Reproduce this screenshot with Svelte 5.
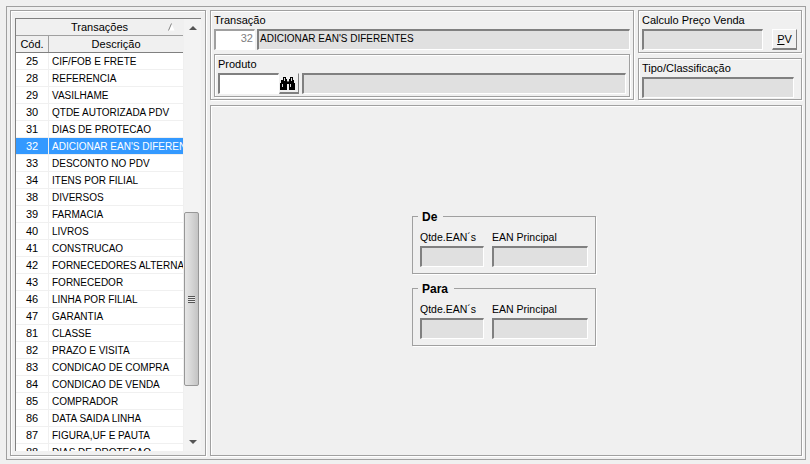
<script>
  const rows = [
    [25, 'CIF/FOB E FRETE'],
    [28, 'REFERENCIA'],
    [29, 'VASILHAME'],
    [30, 'QTDE AUTORIZADA PDV'],
    [31, 'DIAS DE PROTECAO'],
    [32, "ADICIONAR EAN'S DIFERENTES"],
    [33, 'DESCONTO NO PDV'],
    [34, 'ITENS POR FILIAL'],
    [38, 'DIVERSOS'],
    [39, 'FARMACIA'],
    [40, 'LIVROS'],
    [41, 'CONSTRUCAO'],
    [42, 'FORNECEDORES ALTERNATIVOS'],
    [43, 'FORNECEDOR'],
    [46, 'LINHA POR FILIAL'],
    [47, 'GARANTIA'],
    [81, 'CLASSE'],
    [82, 'PRAZO E VISITA'],
    [83, 'CONDICAO DE COMPRA'],
    [84, 'CONDICAO DE VENDA'],
    [85, 'COMPRADOR'],
    [86, 'DATA SAIDA LINHA'],
    [87, 'FIGURA,UF E PAUTA'],
    [88, 'DIAS DE PROTECAO']
  ];
  const groups = ['De', 'Para'];
</script>

<div class="frame">
  <aside class="panel left">
    <div class="grid">
      <div class="table">
        <div class="head-top">
          Transações
          <svg class="sort" width="7" height="8" viewBox="0 0 7 8">
            <path d="M3.5 .5L.5 7.5h6z" fill="#fff" />
            <path d="M3.5 .5L.5 7.5" stroke="#808080" fill="none" />
          </svg>
        </div>
        <div class="head-cols">
          <div class="c1">Cód.</div>
          <div class="c2">Descrição</div>
        </div>
        <div class="rows">
          {#each rows as r}
            <div class="row" class:selected={r[0] === 32}>
              <div class="c1">{r[0]}</div>
              <div class="c2">{r[1]}</div>
            </div>
          {/each}
        </div>
      </div>
      <div class="scrollbar">
        <div class="arrow up"></div>
        <div class="thumb"><div class="grip"></div></div>
        <div class="arrow down"></div>
      </div>
    </div>
  </aside>

  <div class="right">
    <div class="top">
      <section class="panel transacao">
        <div class="label">Transação</div>
        <div class="line">
          <div class="field code">32</div>
          <div class="field sunken desc">ADICIONAR EAN'S DIFERENTES</div>
        </div>
        <div class="panel produto">
          <div class="label">Produto</div>
          <div class="line tight">
            <div class="field prod"></div>
            <button class="find" aria-label="Pesquisar">
              <svg width="16" height="13" viewBox="0 0 16 13" shape-rendering="crispEdges">
                <path d="M3 0h3v2h1v2h2V2h1V0h3v3h1v3h1v7H9V7H7v6H0V6h1V3h2z" fill="#000" />
                <path d="M4 1h1v3H4zM11 1h1v3h-1zM2 7h1v3H2zM10 7h1v3h-1z" fill="#d8d8d8" />
                <path d="M7 4h2v1H7z" fill="#666" />
              </svg>
            </button>
            <div class="field sunken grow"></div>
          </div>
        </div>
      </section>
      <div class="side">
        <section class="panel calc">
          <div class="label">Calculo Preço Venda</div>
          <div class="line">
            <div class="field sunken calc-field"></div>
            <button class="pv"><u>P</u>V</button>
          </div>
        </section>
        <section class="panel tipo">
          <div class="label">Tipo/Classificação</div>
          <div class="field sunken tipo-field"></div>
        </section>
      </div>
    </div>

    <main class="panel main">
      {#each groups as g}
        <fieldset>
          <legend>{g}</legend>
          <div class="cols">
            <div>
              <div class="label">Qtde.EAN´s</div>
              <div class="field sunken qt"></div>
            </div>
            <div>
              <div class="label">EAN Principal</div>
              <div class="field sunken ean"></div>
            </div>
          </div>
        </fieldset>
      {/each}
    </main>
  </div>
</div>

<style>
  :global(body) {
    margin: 0;
    background: #f0f0f0;
  }

  .frame {
    box-sizing: border-box;
    width: 800px;
    height: 454px;
    margin: 6px 0 0 6px;
    padding: 3px;
    display: flex;
    gap: 4px;
    border: 1px solid #a0a0a0;
    font-family: "Liberation Sans", Arial, sans-serif;
    font-size: 11px;
    color: #000;
    background: #f0f0f0;
  }

  .panel {
    box-sizing: border-box;
    border: 1px solid #a0a0a0;
    box-shadow: 1px 1px 0 #fff, inset 1px 1px 0 #fff;
  }

  .left {
    width: 196px;
    height: 446px;
    padding: 7px 4px 4px 4px;
  }

  .grid {
    display: flex;
    height: 433px;
    border-top: 1px solid #808080;
    border-left: 1px solid #808080;
    background: #f0f0f0;
    box-sizing: border-box;
  }

  .table {
    width: 168px;
    overflow: hidden;
    display: flex;
    flex-direction: column;
  }

  .head-top {
    position: relative;
    height: 16px;
    line-height: 16px;
    text-align: center;
    border-bottom: 1px solid #a0a0a0;
    flex: none;
  }

  .sort {
    position: absolute;
    right: 8px;
    top: 4px;
  }

  .head-cols {
    display: flex;
    height: 16px;
    line-height: 16px;
    text-align: center;
    border-bottom: 1px solid #808080;
    flex: none;
  }

  .head-cols .c1 {
    border-right: 1px solid #a0a0a0;
  }

  .c1 {
    width: 32px;
    flex: none;
  }

  .c2 {
    flex: 1;
    white-space: nowrap;
    overflow: hidden;
  }

  .rows {
    flex: 1;
    overflow: hidden;
    background: #fff;
  }

  .row {
    display: flex;
    height: 16px;
    line-height: 16px;
    border-bottom: 1px solid #f0f0f0;
  }

  .row .c1 {
    text-align: center;
    border-right: 1px solid #f0f0f0;
  }

  .row .c2 {
    padding: 0 2px 0 3px;
    font-size: 10px;
    line-height: 18px;
  }

  .row.selected {
    background: #3399ff;
    color: #fff;
  }

  .scrollbar {
    width: 17px;
    margin-left: 1px;
    display: flex;
    flex-direction: column;
    align-items: center;
    background: #f3f3f3;
  }

  .arrow {
    width: 0;
    height: 0;
    border-left: 4px solid transparent;
    border-right: 4px solid transparent;
  }

  .arrow.up {
    margin-top: 7px;
    border-bottom: 4px solid #555;
  }

  .arrow.down {
    margin-top: 54px;
    border-top: 4px solid #555;
  }

  .thumb {
    box-sizing: border-box;
    width: 15px;
    height: 174px;
    margin-top: 182px;
    align-self: flex-start;
    border: 1px solid #979797;
    border-radius: 2px;
    background: linear-gradient(90deg, #e6e6e6, #d6d6d6 50%, #c4c4c4);
    display: flex;
    align-items: center;
    justify-content: center;
  }

  .grip {
    width: 7px;
    height: 7px;
    background: repeating-linear-gradient(180deg, #555 0 1px, #e8e8e8 1px 2px);
  }

  .right {
    flex: 1;
    min-width: 0;
    display: flex;
    flex-direction: column;
    gap: 5px;
  }

  .top {
    display: flex;
    gap: 4px;
    height: 90px;
  }

  .transacao {
    width: 424px;
    padding: 2px 3px 0;
  }

  .label {
    height: 16px;
    line-height: 14px;
  }

  .line {
    display: flex;
    gap: 2px;
  }

  .field {
    box-sizing: border-box;
    height: 21px;
    line-height: 15px;
    background: #fff;
    border-style: solid;
    border-width: 2px 1px 1px 2px;
    border-color: #808080 #fff #fff #808080;
  }

  .sunken {
    background: #e0e0e0;
  }

  .code {
    width: 41px;
    text-align: right;
    padding-right: 1px;
    color: #808080;
    border-color: #a0a0a0 #fff #fff #a0a0a0;
  }

  .desc {
    flex: 1;
    padding-left: 1px;
    font-size: 10px;
  }

  .produto {
    margin-top: 4px;
    height: 43px;
    padding: 2px 3px;
  }

  .tight {
    gap: 0;
  }

  .prod {
    width: 61px;
  }

  .find {
    box-sizing: border-box;
    width: 20px;
    height: 21px;
    padding: 0 2px 0 0;
    background: #f0f0f0;
    border: 1px solid #f0f0f0;
    border-right-color: #808080;
    border-bottom: 2px solid #808080;
    display: flex;
    align-items: center;
    justify-content: center;
  }

  .grow {
    flex: 1;
    margin-left: 3px;
  }

  .side {
    flex: 1;
    display: flex;
    flex-direction: column;
    gap: 5px;
  }

  .calc {
    height: 43px;
    padding: 2px 3px 0;
  }

  .calc-field {
    width: 121px;
  }

  .pv {
    box-sizing: border-box;
    width: 25px;
    height: 21px;
    margin-left: 7px;
    padding: 0;
    font: inherit;
    color: inherit;
    background: #f0f0f0;
    border: 1px solid #fff;
    border-right-color: #808080;
    border-bottom: 2px solid #808080;
  }

  .tipo {
    height: 42px;
    padding: 2px 3px 0;
  }

  .tipo-field {
    width: 152px;
  }

  .main {
    height: 351px;
    padding: 104px 4px 0 0;
    display: flex;
    flex-direction: column;
    align-items: center;
    gap: 8px;
  }

  fieldset {
    box-sizing: border-box;
    width: 184px;
    height: 64px;
    margin: 0;
    padding: 0 7px;
    border: 1px solid #a0a0a0;
    box-shadow: 1px 1px 0 #fff;
  }

  legend {
    position: relative;
    top: 1px;
    padding: 0 6px 0 4px;
    margin-left: -2px;
    font-weight: bold;
    font-size: 12px;
    line-height: 13px;
    color: #000;
  }

  .cols {
    display: flex;
    gap: 8px;
    margin-top: 6px;
    font-size: 10.5px;
  }

  .cols .label {
    height: 17px;
    line-height: 17px;
  }

  .qt {
    width: 64px;
  }

  .ean {
    width: 96px;
  }
</style>
